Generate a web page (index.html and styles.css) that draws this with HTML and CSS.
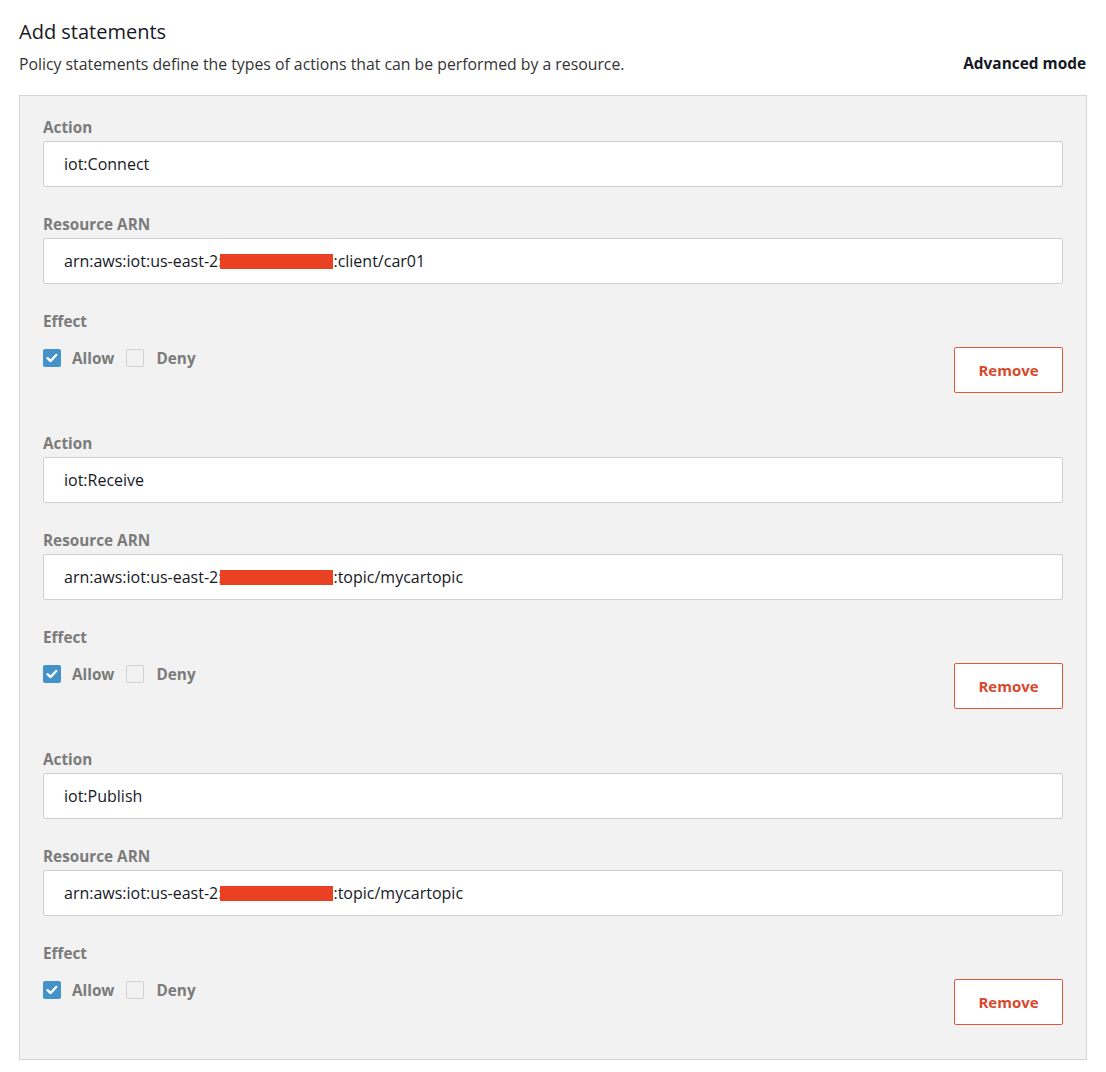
FILE: index.html
```html
<!DOCTYPE html>
<html lang="en">
<head>
    <meta charset="UTF-8">
    <title>Add statements</title>
    <link rel="stylesheet" href="styles.css">
</head>
<body>
    <div class="page">
        <h2 class="title">Add statements</h2>
        <div class="desc-row">
            <p class="desc">Policy statements define the types of actions that can be performed by a resource.</p>
            <a class="advanced">Advanced mode</a>
        </div>

        <div class="statements">
            <!-- Statement 1 -->
            <div class="statement">
                <label class="field-label">Action</label>
                <div class="input">iot:Connect</div>
                <label class="field-label">Resource ARN</label>
                <div class="input">arn:aws:iot:us-east-2:<span class="redact"></span>:client/car01</div>
                <label class="field-label">Effect</label>
                <div class="effect-row">
                    <div class="checks">
                        <span class="box checked"><svg viewBox="0 0 18 18" width="18" height="18"><path d="M4.5 9.2 L7.6 12 L13.2 6" fill="none" stroke="#fff" stroke-width="2.4" stroke-linecap="round" stroke-linejoin="round"/></svg></span>
                        <span class="check-text">Allow</span>
                        <span class="box"></span>
                        <span class="check-text">Deny</span>
                    </div>
                    <button class="remove">Remove</button>
                </div>
            </div>

            <!-- Statement 2 -->
            <div class="statement">
                <label class="field-label">Action</label>
                <div class="input">iot:Receive</div>
                <label class="field-label">Resource ARN</label>
                <div class="input">arn:aws:iot:us-east-2:<span class="redact"></span>:topic/mycartopic</div>
                <label class="field-label">Effect</label>
                <div class="effect-row">
                    <div class="checks">
                        <span class="box checked"><svg viewBox="0 0 18 18" width="18" height="18"><path d="M4.5 9.2 L7.6 12 L13.2 6" fill="none" stroke="#fff" stroke-width="2.4" stroke-linecap="round" stroke-linejoin="round"/></svg></span>
                        <span class="check-text">Allow</span>
                        <span class="box"></span>
                        <span class="check-text">Deny</span>
                    </div>
                    <button class="remove">Remove</button>
                </div>
            </div>

            <!-- Statement 3 -->
            <div class="statement">
                <label class="field-label">Action</label>
                <div class="input">iot:Publish</div>
                <label class="field-label">Resource ARN</label>
                <div class="input">arn:aws:iot:us-east-2:<span class="redact"></span>:topic/mycartopic</div>
                <label class="field-label">Effect</label>
                <div class="effect-row">
                    <div class="checks">
                        <span class="box checked"><svg viewBox="0 0 18 18" width="18" height="18"><path d="M4.5 9.2 L7.6 12 L13.2 6" fill="none" stroke="#fff" stroke-width="2.4" stroke-linecap="round" stroke-linejoin="round"/></svg></span>
                        <span class="check-text">Allow</span>
                        <span class="box"></span>
                        <span class="check-text">Deny</span>
                    </div>
                    <button class="remove">Remove</button>
                </div>
            </div>
        </div>
    </div>
</body>
</html>
```

FILE: styles.css
```css
body {
    margin: 0;
    font-family: "Open Sans", Arial, sans-serif;
    color: #16191f;
    background: #fff;
}
.page {
    padding: 20px 19px 12px 19px;
}
.title {
    margin: 0;
    font-size: 20px;
    line-height: 24px;
    font-weight: 400;
    color: #16191f;
}
.desc-row {
    display: flex;
    justify-content: space-between;
    align-items: center;
    margin-top: 10px;
    padding-right: 1px;
}
.desc {
    margin: 0;
    font-size: 15.8px;
    line-height: 20px;
    color: #333;
}
.advanced {
    font-size: 15.4px;
    font-weight: 700;
    color: #16191f;
    line-height: 20px;
}
.statements {
    margin-top: 21px;
    background: #f2f2f2;
    border: 1px solid #d5d5d5;
    padding: 21px 23px 34px 23px;
}
.statement + .statement {
    margin-top: 40px;
}
.field-label {
    display: block;
    font-size: 15.3px;
    font-weight: 700;
    color: #7b7b7b;
    line-height: 20px;
    margin-bottom: 4px;
}
.input {
    height: 44px;
    line-height: 44px;
    background: #fff;
    border: 1px solid #cfcfcf;
    border-radius: 2px;
    padding-left: 20px;
    font-size: 16px;
    color: #16191f;
    margin-bottom: 27px;
}
.redact {
    display: inline-block;
    width: 113px;
    height: 15px;
    background: #ea4125;
    vertical-align: -2px;
    margin-left: -2px;
}
.effect-row {
    display: flex;
    justify-content: space-between;
    align-items: flex-start;
    margin-top: 16px;
}
.checks {
    display: flex;
    align-items: center;
    height: 22px;
}
.box {
    display: inline-block;
    width: 16px;
    height: 16px;
    border: 1px solid #d2d2d2;
    border-radius: 2px;
    background: #f2f2f2;
    margin-right: 12px;
}
.box.checked {
    width: 18px;
    height: 18px;
    border: none;
    background: #4592c9;
    margin-right: 11px;
}
.box svg {
    display: block;
}
.check-text {
    font-size: 15.3px;
    font-weight: 700;
    color: #7b7b7b;
    margin-right: 12px;
}
.remove {
    width: 109px;
    height: 46px;
    background: #fff;
    border: 1px solid #e0583b;
    border-radius: 2px;
    color: #d8492b;
    font-family: "Open Sans", Arial, sans-serif;
    font-size: 15px;
    font-weight: 700;
    cursor: pointer;
}
```
